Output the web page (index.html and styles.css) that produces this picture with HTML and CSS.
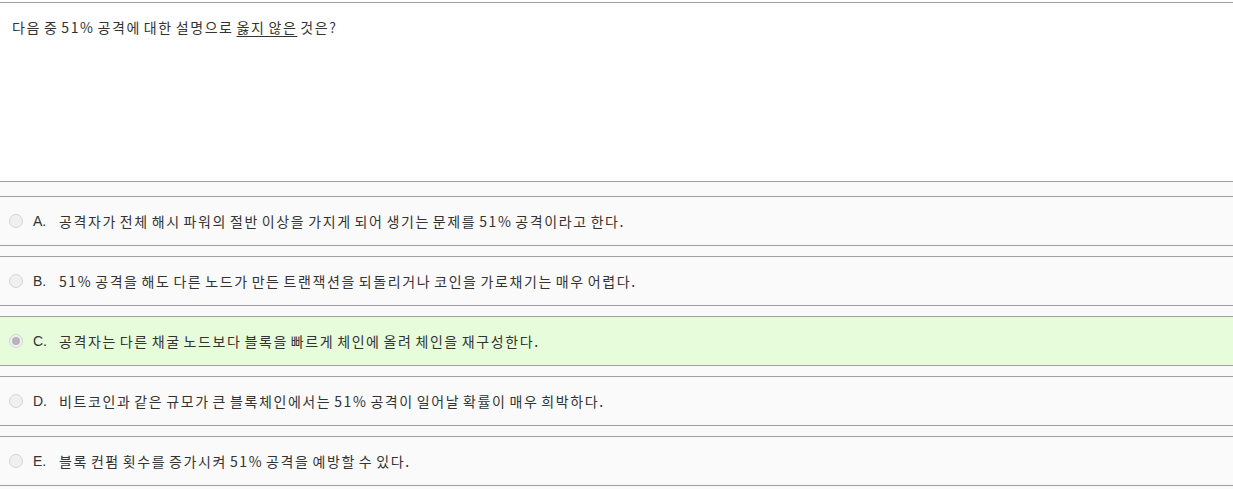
FILE: index.html
```html
<!DOCTYPE html>
<html lang="ko">
<head>
<meta charset="utf-8">
<link rel="stylesheet" href="styles.css">
</head>
<body>
<div class="page">
  <div class="question">다음 중 51% 공격에 대한 설명으로 <u>옳지 않은</u> 것은?</div>
  <div class="options">
    <div class="option"><span class="radio"></span><span class="letter">A.</span><span class="text">공격자가 전체 해시 파워의 절반 이상을 가지게 되어 생기는 문제를 51% 공격이라고 한다.</span></div>
    <div class="option"><span class="radio"></span><span class="letter">B.</span><span class="text">51% 공격을 해도 다른 노드가 만든 트랜잭션을 되돌리거나 코인을 가로채기는 매우 어렵다.</span></div>
    <div class="option selected"><span class="radio checked"></span><span class="letter">C.</span><span class="text">공격자는 다른 채굴 노드보다 블록을 빠르게 체인에 올려 체인을 재구성한다.</span></div>
    <div class="option"><span class="radio"></span><span class="letter">D.</span><span class="text">비트코인과 같은 규모가 큰 블록체인에서는 51% 공격이 일어날 확률이 매우 희박하다.</span></div>
    <div class="option"><span class="radio"></span><span class="letter">E.</span><span class="text">블록 컨펌 횟수를 증가시켜 51% 공격을 예방할 수 있다.</span></div>
  </div>
</div>
</body>
</html>
```

FILE: styles.css
```css
html, body {
  margin: 0;
  padding: 0;
  background: #fafafa;
}
body {
  font-family: "Noto Sans CJK KR", "Noto Sans", sans-serif;
  font-size: 14px;
  color: #333;
  letter-spacing: 1.6px;
  word-spacing: -2.6px;
}
.page {
  padding-top: 2px;
  background: #ffffff;
}
.question {
  box-sizing: border-box;
  height: 180px;
  border-top: 1px solid #a0a0a0;
  border-bottom: 1px solid #a0a0a0;
  background: #ffffff;
  padding: 14px 12px 0;
  line-height: 20px;
}
.question u {
  text-underline-offset: 3px;
}
.options {
  background: #fafafa;
  padding-top: 14px;
  padding-bottom: 4px;
  display: flex;
  flex-direction: column;
  gap: 10px;
}
.option {
  box-sizing: border-box;
  height: 50px;
  border-top: 1px solid #a0a0a0;
  border-bottom: 1px solid #a0a0a0;
  background: #fafafa;
  display: flex;
  align-items: center;
  padding-left: 9px;
  line-height: 20px;
}
.option.selected {
  background: #e6fcda;
}
.radio {
  box-sizing: border-box;
  width: 14px;
  height: 14px;
  border-radius: 50%;
  border: 1px solid #d4d4d4;
  background: #f0f0f0;
  display: flex;
  align-items: center;
  justify-content: center;
  flex: none;
}
.radio.checked::after {
  content: "";
  width: 8px;
  height: 8px;
  border-radius: 50%;
  background: #b5b5b5;
}
.letter {
  width: 26px;
  margin-left: 10px;
  font-family: "Liberation Sans", "Noto Sans", sans-serif;
  font-size: 14px;
  letter-spacing: 0;
  word-spacing: 0;
}
.text {
  white-space: nowrap;
}
```
